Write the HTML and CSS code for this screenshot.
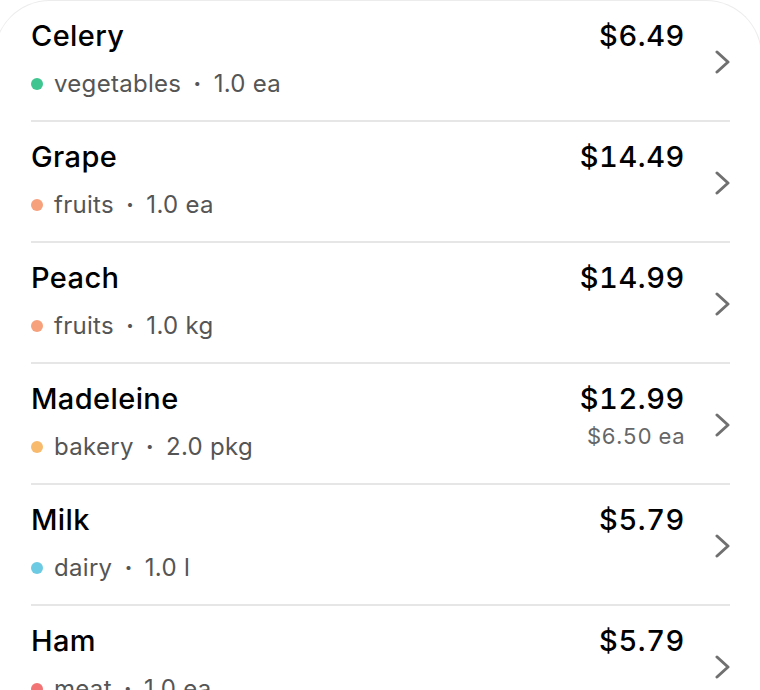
FILE: index.html
```html
<!DOCTYPE html>
<html>
<head>
<meta charset="utf-8">
<link rel="stylesheet" href="styles.css">
</head>
<body>
<div class="card">
  <div class="row">
    <div class="main">
      <div class="name">Celery</div>
      <div class="meta"><span class="dot green"></span><span>vegetables</span><span class="sep">·</span><span>1.0 ea</span></div>
    </div>
    <div class="prices"><div class="price">$6.49</div></div>
    <div class="chev"><svg viewBox="0 0 20 26" width="20" height="26"><path d="M7 3 L18 13 L7 23" fill="none" stroke="#707070" stroke-width="3" stroke-linecap="round" stroke-linejoin="round"/></svg></div>
  </div>
  <div class="row">
    <div class="main">
      <div class="name">Grape</div>
      <div class="meta"><span class="dot orange"></span><span>fruits</span><span class="sep">·</span><span>1.0 ea</span></div>
    </div>
    <div class="prices"><div class="price">$14.49</div></div>
    <div class="chev"><svg viewBox="0 0 20 26" width="20" height="26"><path d="M7 3 L18 13 L7 23" fill="none" stroke="#707070" stroke-width="3" stroke-linecap="round" stroke-linejoin="round"/></svg></div>
  </div>
  <div class="row">
    <div class="main">
      <div class="name">Peach</div>
      <div class="meta"><span class="dot orange"></span><span>fruits</span><span class="sep">·</span><span>1.0 kg</span></div>
    </div>
    <div class="prices"><div class="price">$14.99</div></div>
    <div class="chev"><svg viewBox="0 0 20 26" width="20" height="26"><path d="M7 3 L18 13 L7 23" fill="none" stroke="#707070" stroke-width="3" stroke-linecap="round" stroke-linejoin="round"/></svg></div>
  </div>
  <div class="row">
    <div class="main">
      <div class="name">Madeleine</div>
      <div class="meta"><span class="dot yellow"></span><span>bakery</span><span class="sep">·</span><span>2.0 pkg</span></div>
    </div>
    <div class="prices"><div class="price">$12.99</div><div class="unit">$6.50 ea</div></div>
    <div class="chev"><svg viewBox="0 0 20 26" width="20" height="26"><path d="M7 3 L18 13 L7 23" fill="none" stroke="#707070" stroke-width="3" stroke-linecap="round" stroke-linejoin="round"/></svg></div>
  </div>
  <div class="row">
    <div class="main">
      <div class="name">Milk</div>
      <div class="meta"><span class="dot blue"></span><span>dairy</span><span class="sep">·</span><span>1.0 l</span></div>
    </div>
    <div class="prices"><div class="price">$5.79</div></div>
    <div class="chev"><svg viewBox="0 0 20 26" width="20" height="26"><path d="M7 3 L18 13 L7 23" fill="none" stroke="#707070" stroke-width="3" stroke-linecap="round" stroke-linejoin="round"/></svg></div>
  </div>
  <div class="row">
    <div class="main">
      <div class="name">Ham</div>
      <div class="meta"><span class="dot red"></span><span>meat</span><span class="sep">·</span><span>1.0 ea</span></div>
    </div>
    <div class="prices"><div class="price">$5.79</div></div>
    <div class="chev"><svg viewBox="0 0 20 26" width="20" height="26"><path d="M7 3 L18 13 L7 23" fill="none" stroke="#707070" stroke-width="3" stroke-linecap="round" stroke-linejoin="round"/></svg></div>
  </div>
</div>
</body>
</html>
```
FILE: styles.css
```css
html, body {
  margin: 0;
  padding: 0;
  background: #ffffff;
  overflow: hidden;
}
body {
  font-family: Inter, "Noto Sans", "Liberation Sans", sans-serif;
  color: #000;
}
.card {
  margin: 0 -2px 0 -6px;
  padding: 0 31px 0 36px;
  background: #fff;
  border: 1px solid #ececec;
  border-bottom: none;
  border-radius: 56px 56px 0 0;
  height: 760px;
}
.row {
  display: flex;
  align-items: flex-start;
  height: 119px;
  border-bottom: 2px solid #e6e6e6;
}
.main {
  flex: 1;
  padding-top: 18px;
}
.name {
  font-size: 29px;
  font-weight: 480;
  line-height: 34px;
  letter-spacing: 0.4px;
}
.meta {
  display: flex;
  align-items: center;
  margin-top: 16px;
  font-size: 24px;
  line-height: 30px;
  color: #555555;
  letter-spacing: 0.3px;
}
.dot {
  width: 12px;
  height: 12px;
  border-radius: 50%;
  margin-right: 11px;
}
.green { background: #3fc58f; }
.orange { background: #f7a07c; }
.yellow { background: #f8bb6e; }
.blue { background: #6ccbe3; }
.red { background: #f27474; }
.sep {
  margin: 0 12px;
  font-weight: 700;
}
.prices {
  padding-top: 18px;
  text-align: right;
  font-variant-numeric: tabular-nums;
}
.price {
  font-size: 29px;
  font-weight: 480;
  line-height: 34px;
  letter-spacing: 0.6px;
}
.unit {
  margin-top: 7px;
  font-size: 22px;
  line-height: 26px;
  color: #666666;
  letter-spacing: 0.5px;
}
.chev {
  width: 45px;
  height: 119px;
  display: flex;
  align-items: center;
  justify-content: flex-end;
}
.chev svg {
  display: block;
  margin-top: 2px;
}
```
